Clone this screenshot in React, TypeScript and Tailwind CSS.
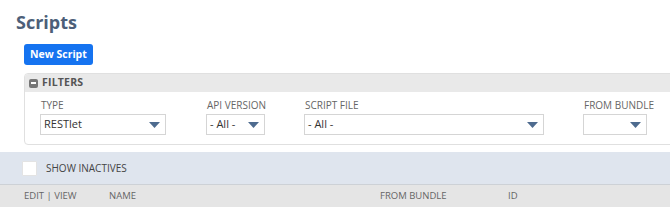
import React from "react";

function Arrow() {
  return (
    <svg width="11" height="6" viewBox="0 0 11 6" className="shrink-0">
      <path d="M0 0 H11 L5.5 6 Z" fill="#4e6b8f" />
    </svg>
  );
}

function Select({ value, width }: { value: string; width: string }) {
  return (
    <div
      className={`${width} h-[21px] border border-[#d5d5d5] bg-white flex items-center justify-between pl-[3px] pr-[5px] text-[11px] text-[#333]`}
    >
      <span>{value}</span>
      <Arrow />
    </div>
  );
}

function Field({ label, children, className }: { label: string; children: React.ReactNode; className: string }) {
  return (
    <div className={`flex flex-col ${className}`}>
      <span className="text-[10px] leading-[12px] text-[#666] uppercase pl-[1px] mb-[3px]">{label}</span>
      {children}
    </div>
  );
}

export default function App() {
  return (
    <div
      className="w-[670px] h-[207px] overflow-hidden bg-white"
      style={{ fontFamily: '"Open Sans", "Liberation Sans", sans-serif' }}
    >
      <div className="pl-[16px] pt-[9px] h-[40px]">
        <h1 className="text-[18px] leading-[26px] font-bold text-[#4d5f79]">Scripts</h1>
      </div>
      <div className="pl-[24px] pt-[4px] flex">
        <button className="h-[21px] px-[6px] rounded-[3px] bg-[#1573f0] text-white text-[10.5px] font-bold leading-[21px]">
          New Script
        </button>
      </div>
      <div className="ml-[24px] mt-[8px] w-[700px] h-[72px] border border-[#e0e0e0] rounded-[4px] overflow-hidden">
        <div className="h-[18px] bg-[#e9e9e9] flex items-center pl-[4px] gap-[4px]">
          <div className="w-[9px] h-[9px] rounded-[2px] bg-[#777] flex items-center justify-center">
            <div className="w-[5px] h-[1.5px] bg-white" />
          </div>
          <span className="text-[10.5px] font-bold text-[#555] tracking-[0.2px]">FILTERS</span>
        </div>
        <div className="flex pl-[15px] pt-[7px]">
          <Field label="Type" className="w-[166px]">
            <Select value="RESTlet" width="w-[126px]" />
          </Field>
          <Field label="API Version" className="w-[98px]">
            <Select value="- All -" width="w-[59px]" />
          </Field>
          <Field label="Script File" className="w-[279px]">
            <Select value="- All -" width="w-[240px]" />
          </Field>
          <Field label="From Bundle" className="w-[80px]">
            <Select value="" width="w-[64px]" />
          </Field>
        </div>
      </div>
      <div className="mt-[7px] h-[33px] bg-[#dfe5ee] border-b border-[#cdd1d6] flex items-center pl-[22px]">
        <div className="w-[15px] h-[15px] bg-white border border-[#e3e3e3] rounded-[1px]" />
        <span className="ml-[9px] text-[10px] text-[#444]">SHOW INACTIVES</span>
      </div>
      <div className="h-[23px] bg-[#e5e5e5] flex items-center text-[9.5px] text-[#666]">
        <span className="pl-[24px] w-[109px]">EDIT | VIEW</span>
        <span className="w-[271px]">NAME</span>
        <span className="w-[128px]">FROM BUNDLE</span>
        <span>ID</span>
      </div>
    </div>
  );
}
